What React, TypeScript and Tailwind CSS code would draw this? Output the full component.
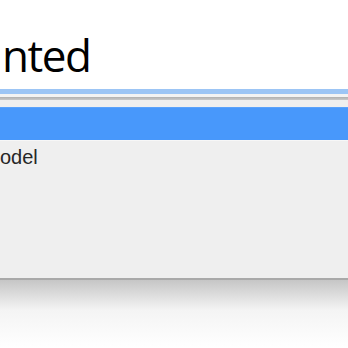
export default function App() {
  return (
    <div className="w-[348px] h-[348px] overflow-hidden bg-white flex flex-col">
      {/* heading, clipped on the left */}
      <div className="h-[89px] shrink-0 bg-white pt-[33px] pl-[2px]">
        <h1 className="text-[44px] leading-none text-black font-['Open_Sans',sans-serif] tracking-[-1.5px]">
          nted
        </h1>
      </div>

      {/* focus ring + list top edge */}
      <div className="h-[5px] shrink-0 bg-[#9cc5f5]" />
      <div className="h-[3px] shrink-0 bg-[#f3f3f3]" />
      <div className="h-[3px] shrink-0 bg-gradient-to-b from-[#b0b0b0] to-[#c9c9c9]" />
      <div className="h-[7px] shrink-0 bg-[#efefef]" />

      {/* dropdown list */}
      <ul className="shrink-0 bg-[#efefef] h-[171px] font-['Liberation_Sans',Arial,sans-serif] text-[20px] text-[#262626]">
        <li className="h-[33px] bg-[#4898fb] border-t border-[#5aa2fb]" />
        <li className="h-[33px] leading-[33px] border-t border-[#f7f7f7]">odel</li>
      </ul>

      <div className="h-[2px] shrink-0 bg-[#a9a9a9]" />
      <div className="h-[30px] shrink-0 bg-gradient-to-b from-[#c6c6c6] to-[#f4f4f4]" />
      <div className="flex-1 bg-gradient-to-b from-[#f4f4f4] to-white" />
    </div>
  );
}
